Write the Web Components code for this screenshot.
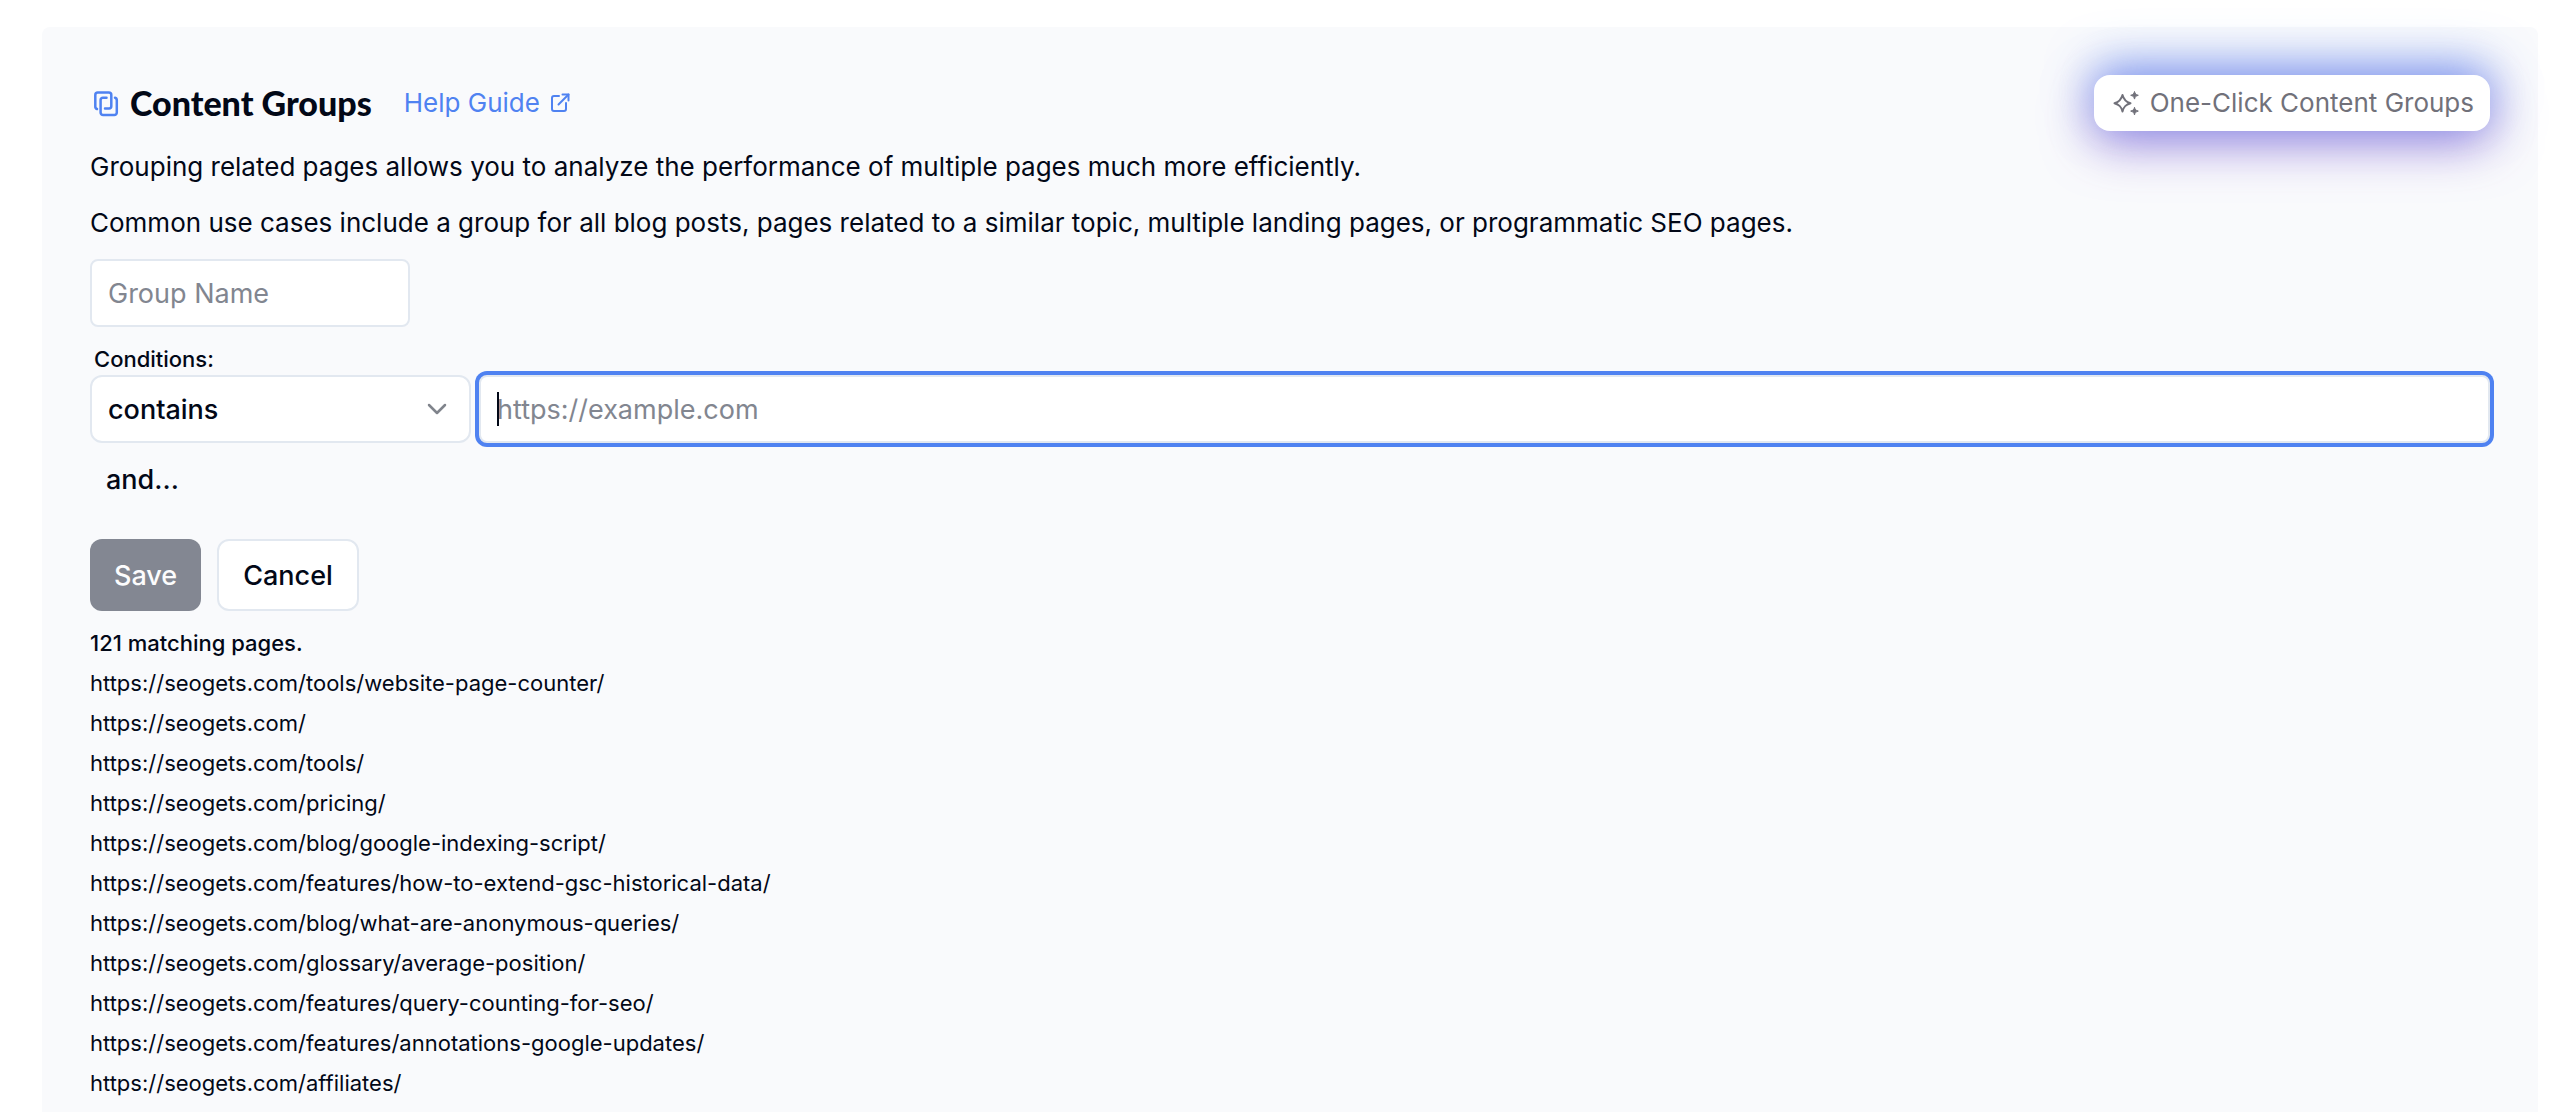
<!DOCTYPE html>
<html lang="en">
<head>
<meta charset="utf-8">
<title>Content Groups</title>
<style>
  body {
    margin: 0;
    background: #fff;
    color: #020817;
    font-family: Inter, "Liberation Sans", sans-serif;
    font-size: 26px;
    --brand: #4f82f1;
    --line: #e2e8f0;
    --muted: #828690;
    --panel: #f9fafc;
  }
</style>
</head>
<body>
<content-groups-page></content-groups-page>

<script>
const define = (name, html, setup) => {
  const template = document.createElement('template');
  template.innerHTML = '<style>*{box-sizing:border-box}</style>' + html;
  customElements.define(name, class extends HTMLElement {
    constructor() {
      super();
      this.attachShadow({ mode: 'open' }).append(template.content.cloneNode(true));
    }
    connectedCallback() {
      if (setup) setup(this);
    }
  });
};

define('help-link', `
  <style>
    :host { display: inline-flex; }
    a { display: inline-flex; align-items: center; gap: 8px; color: var(--brand); text-decoration: none; line-height: 40px; }
    svg { width: 24px; height: 24px; }
  </style>
  <a href="#help"><slot></slot>
    <svg viewBox="0 0 24 24" fill="none" stroke="currentColor" stroke-width="2" stroke-linecap="round" stroke-linejoin="round" aria-hidden="true">
      <path d="M11 5H6a2 2 0 0 0-2 2v11a2 2 0 0 0 2 2h10a2 2 0 0 0 2-2v-6"/><path d="M10.500 13.500 20.500 3.500"/><path d="M14.500 3.500h6v6"/>
    </svg>
  </a>
`);

define('glow-button', `
  <style>
    :host { display: block; }
    button {
      display: flex; align-items: center; gap: 10px; height: 56px; padding: 0 16px 0 18px;
      border: 0; border-radius: 16px; background: #fff; color: #71717a;
      font: inherit; line-height: 40px; white-space: nowrap;
      box-shadow: 0 -12px 46px rgba(65, 120, 240, .55), 0 12px 50px rgba(115, 75, 205, .65);
    }
    svg { width: 28px; height: 28px; }
  </style>
  <button type="button">
    <svg viewBox="0 0 28 28" aria-hidden="true">
      <path d="M10.500 6c1.200 4.700 3 6.800 8 8.200-5 1.500-6.800 3.500-8 8.300-1.200-4.800-3-6.800-8-8.300 5-1.400 6.800-3.500 8-8.200Z" fill="none" stroke="currentColor" stroke-width="2" stroke-linejoin="round"/>
      <path d="M22.500 2.500c.6 2.300 1.200 3 3.800 3.800-2.600.8-3.200 1.500-3.800 3.800-.6-2.300-1.200-3-3.800-3.800 2.600-.8 3.200-1.500 3.800-3.800ZM22.500 18.300c.6 2.300 1.200 3 3.800 3.800-2.600.8-3.200 1.500-3.800 3.800-.6-2.300-1.200-3-3.800-3.800 2.600-.8 3.200-1.500 3.800-3.800Z" fill="currentColor" stroke="currentColor" stroke-width="1" stroke-linejoin="round"/>
    </svg>
    <slot></slot>
  </button>
`);

define('page-header', `
  <style>
    :host { display: flex; align-items: center; justify-content: space-between; }
    div { display: flex; align-items: center; gap: 32px; }
    h1 { display: flex; align-items: center; gap: 10px; margin: 0; padding-left: 2px; font: 900 34px/48px Lato, Inter, sans-serif; }
    svg { width: 28px; height: 28px; color: var(--brand); }
  </style>
  <div>
    <h1>
      <svg viewBox="0 0 28 28" fill="none" stroke="currentColor" stroke-width="2.500" stroke-linecap="round" stroke-linejoin="round" aria-hidden="true">
        <path d="M5 20a2.500 2.500 0 0 1-1.700-2.500V6A2.500 2.500 0 0 1 5.800 3.500h11A2.500 2.500 0 0 1 19.300 6v11.200a2.200 2.200 0 0 1-2.200 2.200H13"/>
        <path d="M14.500 8.700h-3.700a2.200 2.200 0 0 0-2.200 2.200V23.500a2.500 2.500 0 0 0 2.500 2.500h11.200a2.500 2.500 0 0 0 2.500-2.500V11.200a2.500 2.500 0 0 0-1.800-2.500"/>
      </svg>
      Content Groups
    </h1>
    <help-link>Help Guide</help-link>
  </div>
  <glow-button>One-Click Content Groups</glow-button>
`);

define('text-field', `
  <style>
    :host { display: block; position: relative; }
    input {
      display: block; width: 100%; height: 68px; padding: 0 16px; border: 2px solid var(--line);
      border-radius: 8px; background: #fff; color: inherit; font: inherit; outline: 0;
    }
    input::placeholder { color: var(--muted); opacity: 1; }
    .caret { display: none; position: absolute; left: 18px; top: 17px; width: 2px; height: 34px; background: #020817; }
    :host([active]) input { box-shadow: 0 0 0 4px var(--brand); }
    :host([active]) .caret { display: block; }
  </style>
  <input type="text"><span class="caret"></span>
`, host => {
  const input = host.shadowRoot.querySelector('input');
  input.placeholder = host.getAttribute('placeholder');
  input.setAttribute('aria-label', input.placeholder);
});

define('operator-select', `
  <style>
    :host { display: grid; align-items: center; }
    select, svg { grid-area: 1 / 1; }
    select {
      appearance: none; width: 100%; height: 68px; padding: 0 64px 0 16px; border: 2px solid var(--line);
      border-radius: 12px; background: #fff; color: inherit; font: inherit; font-weight: 500;
    }
    svg { justify-self: end; width: 28px; height: 28px; margin-right: 20px; color: #80848c; pointer-events: none; }
  </style>
  <select aria-label="Condition operator"><option>contains</option><option>does not contain</option><option>equals</option></select>
  <svg viewBox="0 0 28 28" fill="none" stroke="currentColor" stroke-width="2.500" stroke-linecap="round" stroke-linejoin="round" aria-hidden="true"><path d="m6 10 8 8 8-8"/></svg>
`);

define('action-button', `
  <style>
    :host { display: block; }
    button {
      height: 72px; padding: 0 24px; border: 2px solid var(--line); border-radius: 12px;
      background: #fff; color: inherit; font: inherit; font-weight: 500;
    }
    :host([kind="primary"]) button { border: 0; background: #0f172a; color: #fff; opacity: .5; }
    :host([kind="ghost"]) button { padding: 0 16px; border: 0; background: none; }
  </style>
  <button type="button"><slot></slot></button>
`);

define('group-form', `
  <style>
    :host { display: flex; flex-direction: column; font-size: 27px; }
    .name { width: 320px; }
    .label { margin: 16px 0 0; padding-left: 4px; font-size: 22px; font-weight: 500; line-height: 32px; }
    .row { display: grid; grid-template-columns: 381px 1fr; gap: 8px; }
    .actions { display: flex; gap: 16px; margin-top: 24px; }
  </style>
  <text-field class="name" placeholder="Group Name"></text-field>
  <p class="label">Conditions:</p>
  <div class="row">
    <operator-select></operator-select>
    <text-field active placeholder="https://example.com"></text-field>
  </div>
  <action-button kind="ghost">and...</action-button>
  <div class="actions">
    <action-button kind="primary">Save</action-button>
    <action-button>Cancel</action-button>
  </div>
`);

define('matching-pages', `
  <style>
    :host { display: block; font-size: 22px; line-height: 40px; }
    p { margin: 0; font-weight: 500; }
    ul { margin: 0; padding: 0; list-style: none; }
  </style>
  <p>121 matching pages.</p>
  <ul>
    <li>https://seogets.com/tools/website-page-counter/</li>
    <li>https://seogets.com/</li>
    <li>https://seogets.com/tools/</li>
    <li>https://seogets.com/pricing/</li>
    <li>https://seogets.com/blog/google-indexing-script/</li>
    <li>https://seogets.com/features/how-to-extend-gsc-historical-data/</li>
    <li>https://seogets.com/blog/what-are-anonymous-queries/</li>
    <li>https://seogets.com/glossary/average-position/</li>
    <li>https://seogets.com/features/query-counting-for-seo/</li>
    <li>https://seogets.com/features/annotations-google-updates/</li>
    <li>https://seogets.com/affiliates/</li>
  </ul>
`);

define('content-groups-page', `
  <style>
    :host { display: flex; min-height: 100vh; padding: 27px 30px 0 42px; box-sizing: border-box; }
    main { flex: 1; padding: 48px 48px 0; border-radius: 8px 8px 0 0; background: var(--panel); }
    .intro { margin: 8px 0; line-height: 56px; }
    .intro p { margin: 0; }
    matching-pages { margin-top: 12px; }
  </style>
  <main>
    <page-header></page-header>
    <div class="intro">
      <p>Grouping related pages allows you to analyze the performance of multiple pages much more efficiently.</p>
      <p>Common use cases include a group for all blog posts, pages related to a similar topic, multiple landing pages, or programmatic SEO pages.</p>
    </div>
    <group-form></group-form>
    <matching-pages></matching-pages>
  </main>
`);
</script>
</body>
</html>
